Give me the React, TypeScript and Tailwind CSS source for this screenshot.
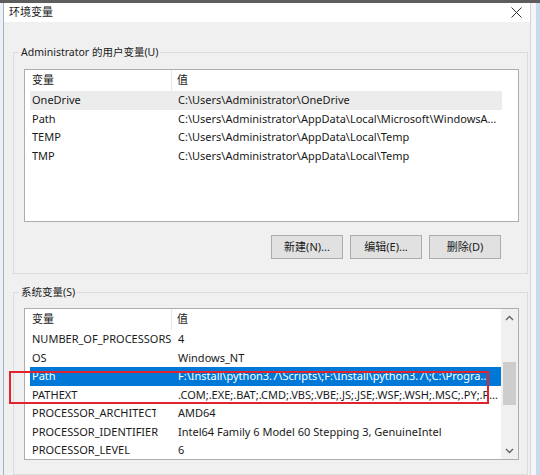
import React from 'react'

const font = { fontFamily: '"Noto Sans", "Noto Sans CJK SC", sans-serif' }

type Row = { name: string; value: string; clip?: boolean }

const userVars: Row[] = [
  { name: 'OneDrive', value: 'C:\\Users\\Administrator\\OneDrive' },
  { name: 'Path', value: 'C:\\Users\\Administrator\\AppData\\Local\\Microsoft\\WindowsApps;' },
  { name: 'TEMP', value: 'C:\\Users\\Administrator\\AppData\\Local\\Temp' },
  { name: 'TMP', value: 'C:\\Users\\Administrator\\AppData\\Local\\Temp' },
]

const systemVars: Row[] = [
  { name: 'NUMBER_OF_PROCESSORS', value: '4' },
  { name: 'OS', value: 'Windows_NT' },
  { name: 'Path', value: 'F:\\Install\\python3.7\\Scripts\\;F:\\Install\\python3.7\\;C:\\Program Files\\Java\\bin' },
  { name: 'PATHEXT', value: '.COM;.EXE;.BAT;.CMD;.VBS;.VBE;.JS;.JSE;.WSF;.WSH;.MSC;.PY;.PYW' },
  { name: 'PROCESSOR_ARCHITECTURE', value: 'AMD64', clip: true },
  { name: 'PROCESSOR_IDENTIFIER', value: 'Intel64 Family 6 Model 60 Stepping 3, GenuineIntel' },
  { name: 'PROCESSOR_LEVEL', value: '6' },
]

function Header() {
  return (
    <div className="flex h-[21px] items-center text-[#1a1a1a]">
      <div className="w-[147px] h-full flex items-center pl-[7px] border-r border-[#e5e5e5]">变量</div>
      <div className="flex-1 pl-[5px]">值</div>
    </div>
  )
}

function VarRow({ row, state, inset }: { row: Row; state?: 'selected' | 'inactive'; inset?: boolean }) {
  const bg =
    state === 'selected'
      ? 'bg-[#0078d7] text-white'
      : state === 'inactive'
        ? 'bg-[#ececec] text-[#1a1a1a]'
        : 'text-[#1a1a1a]'
  return (
    <div className={`flex h-[18.5px] items-center ml-[5px] ${inset ? 'mr-[16px]' : ''} ${bg}`}>
      <div className="w-[142px] shrink-0 pl-[2px] overflow-hidden whitespace-nowrap">
        <div className={row.clip ? 'w-[124px] overflow-hidden' : ''}>{row.name}</div>
      </div>
      <div className="flex-1 min-w-0 pl-[6px] pr-[2px] truncate">{row.value}</div>
    </div>
  )
}

function Button({ label }: { label: string }) {
  return (
    <button className="w-[72px] h-[24px] bg-[#e1e1e1] border border-[#adadad] text-[11px] text-[#1a1a1a] flex items-center justify-center">
      {label}
    </button>
  )
}

function Chevron({ up }: { up?: boolean }) {
  return (
    <svg width="9" height="6" viewBox="0 0 9 6" className="block">
      <path d={up ? 'M1 5 L4.5 1.5 L8 5' : 'M1 1 L4.5 4.5 L8 1'} fill="none" stroke="#606060" strokeWidth="1.3" />
    </svg>
  )
}

export default function App() {
  return (
    <div className="relative w-[540px] h-[475px] overflow-hidden bg-[#e6ebf0] text-[11px]" style={font}>
      <div className="h-[3px] bg-[#5d5d5d]" />
      <div className="flex h-[472px]">
        <div className="w-[4px] shrink-0 bg-[#eef1f4] border-r border-[#9fb3c8]" />
        <div className="w-[526px] shrink-0 flex flex-col bg-[#f0f0f0]">
          {/* title bar */}
          <div className="h-[24px] bg-white flex items-center justify-between pl-[5px] pr-[8px]">
            <span className="text-[11px] text-[#222]">环境变量</span>
            <svg width="11" height="11" viewBox="0 0 11 11">
              <path d="M0.5 0.5 L10.5 10.5 M10.5 0.5 L0.5 10.5" stroke="#333" strokeWidth="1" />
            </svg>
          </div>

          <div className="pl-[9px] pr-[2px]">
            {/* user variables */}
            <fieldset className="min-w-0 mt-[23px] border border-[#dcdcdc] pl-[10px] pr-[8px] pb-[14px]">
              <legend className="ml-[-5px] px-[2px] leading-[14px] text-[10.5px] text-[#1a1a1a]">Administrator 的用户变量(U)</legend>
              <div className="mt-[10px] h-[153px] bg-white border border-[#adadad]">
                <div className="mr-[16px]">
                  <Header />
                </div>
                {userVars.map((r, i) => (
                  <VarRow key={r.name} row={r} inset state={i === 0 ? 'inactive' : undefined} />
                ))}
              </div>
              <div className="flex justify-end gap-[7px] mt-[13px] pr-[18px]">
                <Button label="新建(N)..." />
                <Button label="编辑(E)..." />
                <Button label="删除(D)" />
              </div>
            </fieldset>

            {/* system variables */}
            <fieldset className="min-w-0 mt-[11px] border border-[#dcdcdc] pl-[10px] pr-[8px] pb-[14px]">
              <legend className="ml-[-5px] px-[2px] leading-[14px] text-[10.5px] text-[#1a1a1a]">系统变量(S)</legend>
              <div className="mt-[9px] h-[152px] bg-white border border-[#adadad] flex">
                <div className="flex-1 min-w-0">
                  <Header />
                  {systemVars.map((r, i) => (
                    <VarRow key={r.name} row={r} state={i === 2 ? 'selected' : undefined} />
                  ))}
                </div>
                <div className="w-[17px] shrink-0 bg-[#f0f0f0] flex flex-col items-center">
                  <div className="h-[17px] flex items-center justify-center">
                    <Chevron up />
                  </div>
                  <div className="flex-1 w-full px-[2px] pt-[36px]">
                    <div className="h-[43px] bg-[#cdcdcd]" />
                  </div>
                  <div className="h-[17px] flex items-center justify-center">
                    <Chevron />
                  </div>
                </div>
              </div>
            </fieldset>
          </div>
        </div>
        <div className="flex-1 bg-[#f4f6f8] border-l border-[#d0d6dd] flex justify-end">
          <div className="w-[4px] bg-[#c9dcef]" />
        </div>
      </div>

      {/* red annotation box */}
      <div className="absolute left-[9px] top-[371px] w-[480px] h-[33px] border-2 border-[#e0232c]" />
    </div>
  )
}
